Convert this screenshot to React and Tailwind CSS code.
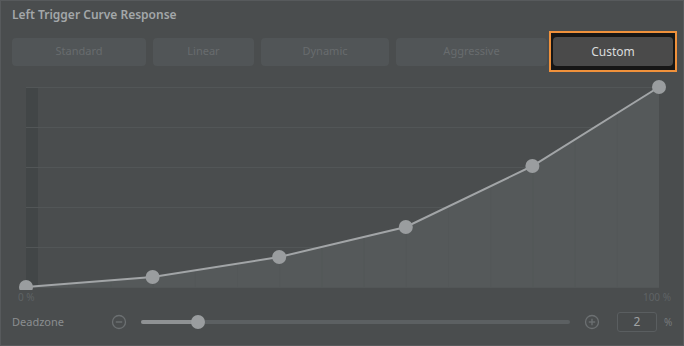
import React, { useState } from 'react';

const presets = [
  { name: 'Standard', w: 'w-[134px]' },
  { name: 'Linear', w: 'w-[101px]' },
  { name: 'Dynamic', w: 'w-[128px]' },
  { name: 'Aggressive', w: 'w-[151px]' },
];

// plot area inside the svg: x 14..647, y 9..209
const PX = 14;
const PW = 633;
const PY = 9;
const PH = 200;
const curve = [0, 5, 15, 30, 60.5, 100];

const CurveChart = () => {
  const pts = curve.map((v, i) => [PX + (PW / 5) * i, PY + PH - (PH * v) / 100]);
  const line = pts.map((p) => p.join(',')).join(' ');
  const fill = `${PX},${PY + PH} ${line} ${PX + PW},${PY + PH}`;

  return (
    <svg width="660" height="212" className="block">
      <defs>
        <clipPath id="under">
          <polygon points={fill} />
        </clipPath>
      </defs>
      {/* deadzone strip */}
      <rect x={PX} y={PY} width="12" height={PH} fill="#424647" />
      {/* horizontal grid */}
      {[0, 1, 2, 3, 4, 5].map((i) => (
        <line key={i} x1={PX} x2={PX + PW} y1={PY + i * 40 + 0.5} y2={PY + i * 40 + 0.5} stroke="#525657" strokeWidth="1" />
      ))}
      <polygon points={fill} fill="#55595a" />
      {/* faint vertical grid under the curve */}
      <g clipPath="url(#under)">
        {Array.from({ length: 16 }).map((_, i) => (
          <line key={i} x1={PX + (PW / 15) * i + 0.5} x2={PX + (PW / 15) * i + 0.5} y1={PY} y2={PY + PH} stroke="#535758" strokeWidth="1" />
        ))}
      </g>
      <polyline points={line} fill="none" stroke="#a2a5a7" strokeWidth="2" />
      {pts.map(([x, y], i) => (
        <circle key={i} cx={x} cy={y} r="7" fill="#9a9d9f" />
      ))}
    </svg>
  );
};

const CircleIcon = ({ plus }) => (
  <svg width="16" height="16" viewBox="0 0 16 16" className="block">
    <circle cx="8" cy="8" r="6.5" fill="none" stroke="#6c7072" strokeWidth="1.3" />
    <line x1="4.8" y1="8" x2="11.2" y2="8" stroke="#6c7072" strokeWidth="1.4" />
    {plus && <line x1="8" y1="4.8" x2="8" y2="11.2" stroke="#6c7072" strokeWidth="1.4" />}
  </svg>
);

export default function App() {
  const [active] = useState('Custom');
  const font = { fontFamily: '"Noto Sans", "Open Sans", sans-serif' };

  return (
    <div style={font} className="w-[684px] h-[346px] bg-[#4a4d4e] border border-[#575a5c] overflow-hidden">
      <div className="pl-[11px] pr-[5px] pt-[6px]">
        <h1 className="text-[12px] leading-[16px] font-semibold text-[#a3a7a9]">Left Trigger Curve Response</h1>

        {/* preset buttons */}
        <div className="mt-[8px] flex items-center h-[41px]">
          {presets.map((p, i) => (
            <button
              key={p.name}
              className={`${p.w} h-[28px] rounded-[4px] bg-[#515557] text-[11px] text-[#686c6e] ${i < 3 ? 'mr-[7px]' : 'mr-[2px]'}`}
            >
              {p.name}
            </button>
          ))}
          <div className="w-[128px] h-[41px] border-2 border-[#f0913b] bg-[#161616] px-[2px] py-[4px]">
            <button className="w-full h-full rounded-[4px] bg-[#4a4a4a] text-[12px] text-[#dadcdd]">
              {active}
            </button>
          </div>
        </div>

        {/* chart */}
        <div className="mt-[6px]">
          <CurveChart />
        </div>
        <div className="flex justify-between w-[660px] pl-[6px] pr-[1px] mt-[1px] text-[10px] leading-[13px] text-[#5f6365]">
          <span>0 %</span>
          <span>100 %</span>
        </div>

        {/* deadzone */}
        <div className="mt-[8px] flex items-center h-[20px]">
          <span className="w-[99px] text-[11px] text-[#8a8e90]">Deadzone</span>
          <CircleIcon />
          <div className="relative ml-[14px] w-[429px] h-[4px] rounded-full bg-[#5c6062]">
            <div className="h-full w-[57px] rounded-full bg-[#8f9294]" />
            <div className="absolute left-[50px] top-[-5px] w-[14px] h-[14px] rounded-full bg-[#9a9d9f]" />
          </div>
          <div className="ml-[14px]">
            <CircleIcon plus />
          </div>
          <div className="ml-[17px] w-[40px] h-[20px] rounded-[3px] border border-[#5a5e60] bg-[#484b4c] flex items-center justify-center text-[12px] text-[#a0a3a5]">
            2
          </div>
          <span className="ml-[7px] text-[10px] text-[#777b7d]">%</span>
        </div>
      </div>
    </div>
  );
}
